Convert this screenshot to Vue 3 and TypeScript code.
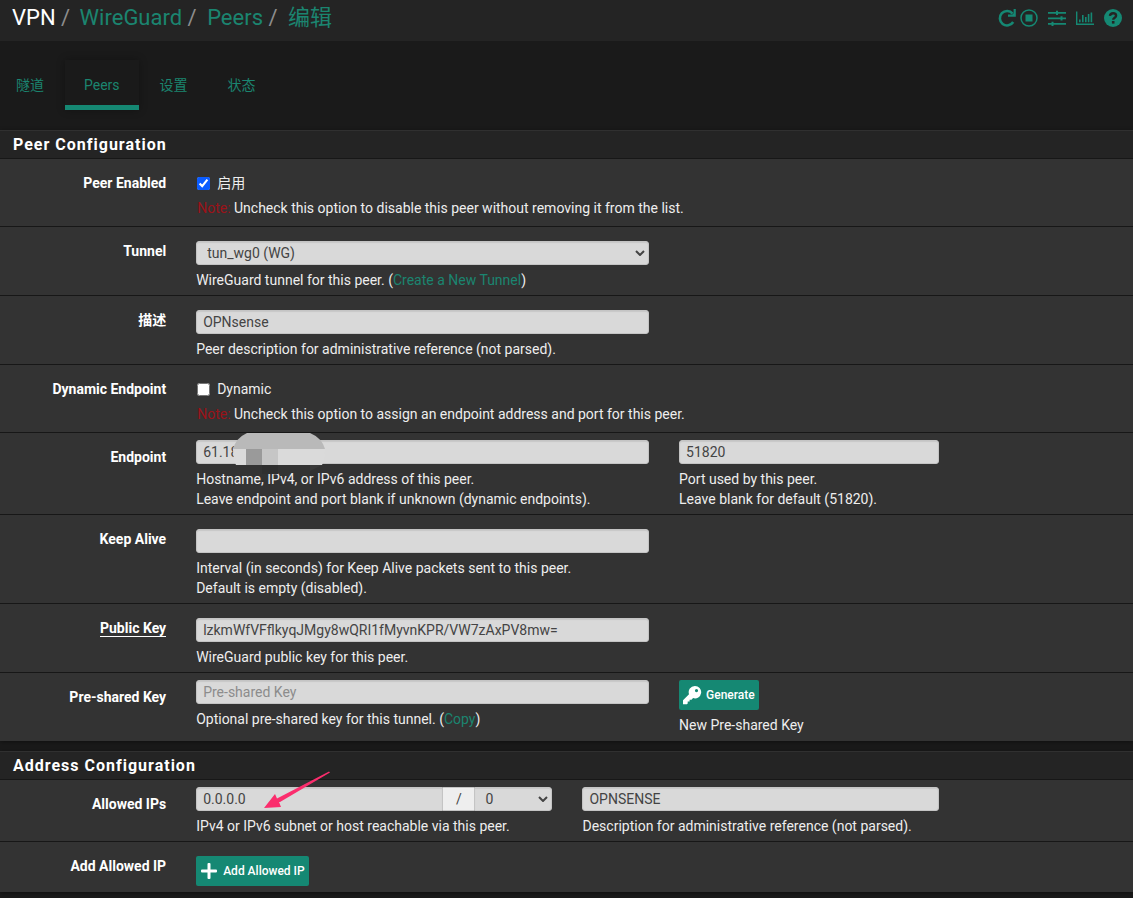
<script setup lang="ts">
import { ref } from 'vue'

interface Tab {
  label: string
  active: boolean
}

const tabs: Tab[] = [
  { label: '隧道', active: false },
  { label: 'Peers', active: true },
  { label: '设置', active: false },
  { label: '状态', active: false },
]

const enabled = ref(true)
const tunnel = ref('tun_wg0 (WG)')
const description = ref('OPNsense')
const dynamic = ref(false)
const endpoint = ref('61.18')
const port = ref('51820')
const keepAlive = ref('')
const publicKey = ref('lzkmWfVFflkyqJMgy8wQRI1fMyvnKPR/VW7zAxPV8mw=')
const presharedKey = ref('')
const allowedIp = ref('0.0.0.0')
const mask = ref('0')
const allowedDescription = ref('OPNSENSE')
</script>

<template>
  <div class="page">
    <header class="topbar">
      <nav class="crumbs" aria-label="Breadcrumb">
        <span class="root">VPN</span>
        <span class="sep">/</span>
        <a href="#">WireGuard</a>
        <span class="sep">/</span>
        <a href="#">Peers</a>
        <span class="sep">/</span>
        <a href="#">编辑</a>
      </nav>
      <div class="tools">
        <a href="#" aria-label="Restart service">
          <svg width="20" height="20" viewBox="0 0 20 20">
            <path d="M15.6 5.600A7.200 7.200 0 1 0 16.200 14" fill="none" stroke="currentColor" stroke-width="2.600" />
            <path d="M18.800 1v7.800H11V6.600h4.300l1.300-1.300V1z" fill="currentColor" />
          </svg>
        </a>
        <a href="#" aria-label="Stop service">
          <svg width="20" height="20" viewBox="0 0 20 20">
            <circle cx="10" cy="10" r="8" fill="none" stroke="currentColor" stroke-width="1.5" />
            <rect x="6.5" y="6.5" width="7" height="7" fill="currentColor" />
          </svg>
        </a>
        <a href="#" class="apart" aria-label="Settings">
          <svg width="20" height="20" viewBox="0 0 20 20" fill="currentColor">
            <path d="M1 4h18v1.800H1zM1 9.500h18v1.800H1zM1 15h18v1.800H1z" />
            <path d="M9 2.800h2V7H9zM13.500 8.300h2v4.200h-2zM4.500 13.800h2V18h-2z" />
          </svg>
        </a>
        <a href="#" class="apart" aria-label="Status">
          <svg width="20" height="20" viewBox="0 0 20 20" fill="currentColor">
            <path d="M1 3.500h1.400v12.100H19V17H1z" />
            <path d="M4 11.500h1.600v2.800H4zM7 7h1.600v7.300H7zM10 9h1.600v5.300H10zM12.800 6h1.600v8.300h-1.600zM15.600 4.500h1.600v9.800h-1.600z" />
          </svg>
        </a>
        <a href="#" class="apart" aria-label="Help">
          <svg width="20" height="20" viewBox="0 0 20 20">
            <circle cx="10" cy="10" r="9" fill="currentColor" />
            <path d="M6.900 7.900C7.200 5.900 8.400 5.200 10.100 5.200s3 1 3 2.500c0 2-2.900 2-2.900 4.100" fill="none" stroke="#242424" stroke-width="2.400" />
            <rect x="8.900" y="13" width="2.600" height="2.600" fill="#242424" />
          </svg>
        </a>
      </div>
    </header>

    <nav class="tabs" aria-label="Sections">
      <a v-for="t in tabs" :key="t.label" href="#" class="tab" :class="{ active: t.active }">{{ t.label }}</a>
    </nav>

    <main>
      <section class="panel">
        <h2>Peer Configuration</h2>

        <div class="row checks">
          <span class="label">Peer Enabled</span>
          <div class="col c10">
            <label class="check"><input v-model="enabled" type="checkbox" />启用</label>
            <p class="note"><span class="warn">Note:</span> Uncheck this option to disable this peer without removing it from the list.</p>
          </div>
        </div>

        <div class="row">
          <label class="label" for="tunnel">Tunnel</label>
          <div class="col c5">
            <div class="select">
              <select id="tunnel" v-model="tunnel">
                <option>tun_wg0 (WG)</option>
              </select>
              <svg width="10" height="6" viewBox="0 0 10 6"><path d="M1 1l4 4 4-4" /></svg>
            </div>
            <p>WireGuard tunnel for this peer. (<a href="#">Create a New Tunnel</a>)</p>
          </div>
        </div>

        <div class="row">
          <label class="label" for="descr">描述</label>
          <div class="col c5">
            <input id="descr" v-model="description" class="field" type="text" />
            <p>Peer description for administrative reference (not parsed).</p>
          </div>
        </div>

        <div class="row checks">
          <span class="label">Dynamic Endpoint</span>
          <div class="col c10">
            <label class="check"><input v-model="dynamic" type="checkbox" />Dynamic</label>
            <p class="note"><span class="warn">Note:</span> Uncheck this option to assign an endpoint address and port for this peer.</p>
          </div>
        </div>

        <div class="row high">
          <label class="label" for="endpoint">Endpoint</label>
          <div class="col c5">
            <div class="anchor">
              <input id="endpoint" v-model="endpoint" class="field" type="text" />
              <svg class="mask" width="92" height="42" viewBox="0 0 92 42" aria-hidden="true">
                <path d="M29 32h16v9H29z" fill="#2f2f2f" />
                <path d="M77 32h12l-12 6z" fill="#3a3a3a" />
                <path d="M0 16h92q0 10-3 16H3Q0 26 0 16z" fill="#dadada" />
                <path d="M0 16Q3 5 14 0h63q12 5 15 16z" fill="#b9b9b9" />
                <path d="M13 16h16v16H13z" fill="#9a9a9a" />
                <path d="M29 16h16v16H29z" fill="#c6c6c6" />
              </svg>
            </div>
            <p>Hostname, IPv4, or IPv6 address of this peer.<br />Leave endpoint and port blank if unknown (dynamic endpoints).</p>
          </div>
          <div class="col c3">
            <input v-model="port" class="field" type="text" aria-label="Port" />
            <p>Port used by this peer.<br />Leave blank for default (51820).</p>
          </div>
        </div>

        <div class="row">
          <label class="label" for="keepalive">Keep Alive</label>
          <div class="col c5">
            <input id="keepalive" v-model="keepAlive" class="field" type="text" />
            <p>Interval (in seconds) for Keep Alive packets sent to this peer.<br />Default is empty (disabled).</p>
          </div>
        </div>

        <div class="row">
          <label class="label" for="pubkey"><span class="required">Public Key</span></label>
          <div class="col c5">
            <input id="pubkey" v-model="publicKey" class="field" type="text" />
            <p>WireGuard public key for this peer.</p>
          </div>
        </div>

        <div class="row high">
          <label class="label" for="psk">Pre-shared Key</label>
          <div class="col c5">
            <input id="psk" v-model="presharedKey" class="field" type="text" placeholder="Pre-shared Key" />
            <p>Optional pre-shared key for this tunnel. (<a href="#">Copy</a>)</p>
          </div>
          <div class="col c3">
            <button type="button" class="btn">
              <svg width="20" height="20" viewBox="0 0 20 20">
                <path d="M12.800 1a6.200 6.200 0 1 1-1.700 12.100L9.500 14.700H7.600v1.900H5.700v1.900L4.900 19.300H1v-4L7 9.200A6.200 6.200 0 0 1 12.800 1zM14.500 4a1.600 1.600 0 1 0 0 3.200 1.600 1.600 0 0 0 0-3.200z" fill="#fff" fill-rule="evenodd" />
              </svg>
              Generate
            </button>
            <p>New Pre-shared Key</p>
          </div>
        </div>
      </section>

      <section class="panel">
        <h2>Address Configuration</h2>

        <div class="row high">
          <label class="label" for="allowed">Allowed IPs</label>
          <div class="col c4">
            <div class="group">
              <input id="allowed" v-model="allowedIp" class="field" type="text" />
              <span class="addon">/</span>
              <div class="select">
                <select v-model="mask" aria-label="Mask">
                  <option>0</option>
                </select>
                <svg width="10" height="6" viewBox="0 0 10 6"><path d="M1 1l4 4 4-4" /></svg>
              </div>
              <svg class="arrow" width="68" height="40" viewBox="0 0 68 40" aria-hidden="true">
                <path d="M66 1.500L67 2.500 17 32l-1 0 2 5L1 38 12 24l2 4.500z" fill="#fb2d6d" />
              </svg>
            </div>
            <p>IPv4 or IPv6 subnet or host reachable via this peer.</p>
          </div>
          <div class="col c4">
            <input v-model="allowedDescription" class="field" type="text" aria-label="Description" />
            <p>Description for administrative reference (not parsed).</p>
          </div>
        </div>

        <div class="row">
          <span class="label">Add Allowed IP</span>
          <div class="col c10">
            <button type="button" class="btn">
              <svg width="20" height="20" viewBox="0 0 20 20"><path d="M9.500 2h1q1 0 1 1v5.500H17q1 0 1 1v1q0 1-1 1h-5.500V17q0 1-1 1h-1q-1 0-1-1v-5.500H3q-1 0-1-1v-1q0-1 1-1h5.500V3q0-1 1-1z" fill="#fff" /></svg>
              Add Allowed IP
            </button>
          </div>
        </div>
      </section>
    </main>
  </div>
</template>

<style>
body {
  margin: 0;
  background: #1a1a1a;
}
</style>

<style scoped>
.page {
  color: #eee;
  font: 14px/20px Roboto, "Noto Sans CJK SC", sans-serif;
  overflow: hidden;
}
a {
  color: #1b8570;
  text-decoration: none;
}
p {
  margin: 5px 0 0;
}
svg {
  display: block;
}
.topbar {
  display: flex;
  justify-content: space-between;
  height: 41px;
  padding: 0 10px 0 12px;
  box-sizing: border-box;
  background: #242424;
}
.crumbs {
  display: flex;
  font-size: 22px;
  line-height: 35px;
}
.root {
  color: #fff;
}
.sep {
  width: 12px;
  margin: 0 9px 0 4px;
  text-align: center;
  color: #8d8d8d;
}
.sep:nth-child(2) {
  margin-right: 8px;
}
.tools {
  display: flex;
  align-items: center;
  height: 36px;
}
.tools a {
  margin-left: 2px;
  color: #158873;
}
.tools a.apart {
  margin-left: 8px;
}
.tabs {
  display: flex;
  gap: 2px;
  padding: 19px 0 20px;
}
.tab {
  padding: 15px 19px 10px;
  border-bottom: 5px solid transparent;
}
.tab:first-child {
  padding-left: 16px;
}
.tab.active {
  border-color: #158873;
  box-shadow: 0 0 8px rgba(0, 0, 0, 0.3);
}
.panel {
  margin-bottom: 10px;
  background: #333;
  box-shadow: 0 1px 4px rgba(0, 0, 0, 0.4);
}
h2 {
  margin: 0;
  padding: 4px 13px;
  border-top: 1px solid #303030;
  border-bottom: 1px solid #171717;
  background: #242424;
  color: #fff;
  font-size: 16px;
  line-height: 19px;
  font-weight: 700;
  letter-spacing: 1px;
}
.row {
  display: flex;
  padding-bottom: 5px;
  border-bottom: 1px solid #171717;
  margin: 0 -14px 0 -12px;
}
.row:last-child {
  border-bottom-color: #333;
}
.row.checks {
  padding-bottom: 8px;
}
.label {
  flex: 0 0 16.6667%;
  box-sizing: border-box;
  padding: 14px 15px 0;
  text-align: right;
  font-weight: 700;
  color: #fff;
}
.required {
  border-bottom: 1px solid #fff;
}
.col {
  box-sizing: border-box;
  padding: 14px 15px 0;
  min-width: 0;
}
.high .col {
  padding-top: 7px;
}
.c3 { flex: 0 0 25%; }
.c4 { flex: 0 0 33.3333%; }
.c5 { flex: 0 0 41.6667%; }
.c10 { flex: 0 0 83.3333%; }
.check {
  display: flex;
  align-items: center;
  width: max-content;
}
.check input {
  width: 13px;
  height: 13px;
  margin: 0 7px 0 1px;
  accent-color: #0b5cff;
}
.warn {
  color: #9c1219;
}
.note {
  padding-left: 1px;
}
.field,
select {
  display: block;
  box-sizing: border-box;
  width: 100%;
  height: 24px;
  padding: 0 6px;
  border: 1px solid #c4c4c4;
  border-radius: 3px;
  background: #d9d9d9;
  box-shadow: inset 0 1px 1px rgba(0, 0, 0, 0.08);
  color: #444;
  font: inherit;
}
.field::placeholder {
  color: #8c8c8c;
}
.select {
  position: relative;
}
select {
  appearance: none;
  padding-left: 10px;
}
.select svg {
  position: absolute;
  right: 4px;
  top: 9px;
  fill: none;
  stroke: #444;
  stroke-width: 2;
  pointer-events: none;
}
.anchor {
  position: relative;
}
.mask {
  position: absolute;
  left: 37px;
  top: -7px;
}
.group {
  position: relative;
  display: flex;
}
.group .field {
  flex: 1;
  min-width: 0;
  border-radius: 3px 0 0 3px;
}
.group .select {
  flex: 0 0 78px;
}
.group select {
  border-radius: 0 3px 3px 0;
}
.addon {
  box-sizing: border-box;
  flex: 0 0 31px;
  border: solid #c4c4c4;
  border-width: 1px 0;
  background: #eee;
  color: #444;
  text-align: center;
  line-height: 22px;
}
.arrow {
  position: absolute;
  left: 67px;
  top: -17px;
}
.btn {
  display: flex;
  align-items: center;
  gap: 4px;
  height: 30px;
  padding: 0 4px 0 3px;
  border: 0;
  border-radius: 2px;
  background: #158873;
  color: #fff;
  font: 500 12px/18px Roboto, "Noto Sans CJK SC", sans-serif;
}
</style>
